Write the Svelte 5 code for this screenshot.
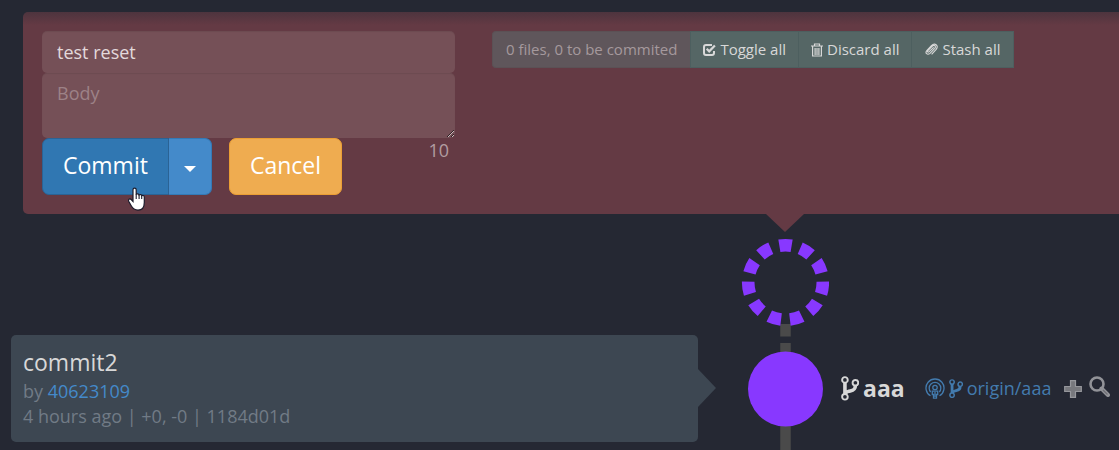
<script>
  let title = $state('test reset');
  let body = $state('');
  const ringDash = 100 / 11;
</script>

{#snippet branch(size)}
  <svg width={size} height={size * 1.375} viewBox="0 0 16 22" fill="none" stroke="currentColor" aria-hidden="true">
    <circle cx="3.5" cy="3.5" r="2.5" stroke-width="1.7" />
    <circle cx="3.5" cy="18.5" r="2.5" stroke-width="1.7" />
    <circle cx="12.8" cy="6" r="2.5" stroke-width="1.7" />
    <path d="M3.5 6v10M12.8 8.5c0 5-4 4.300-6.300 5.200-1.400.5-2 1-2.600 2" stroke-width="3.200" />
  </svg>
{/snippet}

<main>
  <section class="staging">
    <form onsubmit={(e) => e.preventDefault()}>
      <input class="field" type="text" aria-label="Title" bind:value={title} />
      <textarea class="field" placeholder="Body" aria-label="Body" bind:value={body}></textarea>
      <div class="actions">
        <div class="split">
          <button class="btn commit" type="submit">Commit</button>
          <button class="btn more" type="button" aria-label="More commit options"><span class="caret"></span></button>
        </div>
        <button class="btn cancel" type="button">Cancel</button>
        <span class="count">{title.length}</span>
      </div>
    </form>

    <div class="toolbar">
      <span class="status">0 files, 0 to be commited</span>
      <button type="button">
        <svg width="13" height="13" viewBox="0 0 13 13" fill="none" stroke="currentColor" aria-hidden="true">
          <path d="M9 2H3Q1 2 1 4v6q0 2 2 2h6q2 0 2-2V8" stroke-width="2" />
          <path d="M3.700 5.700l2.500 2.600L11.900 2.500" stroke-width="2.200" />
        </svg>
        Toggle all
      </button>
      <button type="button">
        <svg width="12" height="14" viewBox="0 0 12 14" fill="none" stroke="currentColor" aria-hidden="true">
          <path d="M0 3h12M3.500 3V1h5v2M1.600 3v10h8.800V3M4.100 5v7M6 5v7M7.900 5v7" stroke-width="1.200" />
        </svg>
        Discard all
      </button>
      <button type="button">
        <svg width="14" height="13" viewBox="0 0 14 13" fill="none" stroke="currentColor" aria-hidden="true">
          <path d="M9.700 4.300L5.200 8.600c-1.300 1.200-2.400.1-1.300-1.100L8.200 3.300c2-2 4.300 0 2.600 2L6 10.300c-2.600 2.300-5.400-.3-3-2.900L7.400 2.700c3.400-3.500 7.600-.2 4.800 3.700L7.600 11.300" stroke-width="1.100" />
        </svg>
        Stash all
      </button>
    </div>
  </section>

  <section class="graph">
    <article class="card">
      <h2>commit2</h2>
      <p>by <a href="#author">40623109</a></p>
      <p>4 hours ago | +0, -0 | 1184d01d</p>
    </article>

    <svg class="nodes" width="88" height="236" viewBox="0 0 88 236" aria-hidden="true">
      <path d="M44.500 110v12.500M44.500 129v12M44.500 205v31" stroke="#4a4a4a" stroke-width="10.500" />
      <circle
        cx="44.500" cy="68.500" r="37.300" fill="none" stroke="#8838ff" stroke-width="12.600"
        pathLength="100" stroke-dasharray="{ringDash * 0.58} {ringDash * 0.42}" stroke-dashoffset={ringDash * 0.29}
        transform="rotate(-90 44.5 68.5)"
      />
      <circle cx="44.500" cy="175" r="37.500" fill="#8838ff" />
    </svg>

    <div class="refs">
      <span class="local">{@render branch(18)} aaa</span>
      <a class="remote" href="#origin">
        <svg width="20" height="21" viewBox="0 0 20 21" fill="none" stroke="currentColor" stroke-width="1.300" aria-hidden="true">
          <path d="M5.500 17.800a9 9 0 1 1 9 0M5.700 14a5.800 5.800 0 1 1 8.600 0" />
          <circle cx="10" cy="9.500" r="2.200" />
          <path d="M7.300 13.200h5.400v3.300h-1.200v3.700h-3v-3.700H7.300zM10 14v5" />
        </svg>
        {@render branch(14)}
        <span>origin/aaa</span>
      </a>
      <button type="button" aria-label="Add ref">
        <svg width="18" height="18" viewBox="0 0 18 18" aria-hidden="true">
          <path d="M6.500.7h5v5.800h5.800v5h-5.800v5.800h-5v-5.800H.7v-5h5.800z" fill="#77787d" stroke="#96979c" stroke-width="1.200" />
        </svg>
      </button>
      <button class="search" type="button" aria-label="Search">
        <svg width="21" height="21" viewBox="0 0 21 21" fill="none" aria-hidden="true">
          <circle cx="8" cy="8" r="6.500" stroke="#929398" stroke-width="2.600" />
          <path d="M12.500 12.500l6.500 6.500" stroke="#929398" stroke-width="4" stroke-linecap="round" />
          <path d="M14 14l4.500 4.500" stroke="#6d6e74" stroke-width="1.200" />
        </svg>
      </button>
    </div>
  </section>

  <svg class="pointer" width="17" height="24" viewBox="0 0 17 24" aria-hidden="true">
    <path
      d="M5 14.500V2.700C5 .5 8.200.5 8.200 2.700v4.800c.5-1 2.600-.8 2.900.5.700-.9 2.400-.5 2.600.7.900-.8 2.600-.3 2.600 1.300v5.500c0 4.500-2.300 7.600-6.300 7.600-3.700 0-5.400-1.800-6.800-4.300L.7 14.300c-.8-1.800 1-3.100 2.500-1.800z"
      fill="#fff" stroke="#1b1b2b" stroke-width="1.200"
    />
    <path d="M8.200 7v5M11.100 8v4M13.700 9v3" stroke="#1b1b2b" stroke-width="1.100" />
  </svg>
</main>

<style>
  :global(body) {
    margin: 0;
    background: #252833;
  }

  main {
    position: relative;
    padding-top: 12px;
    font: 18px/25px 'Open Sans', sans-serif;
    color: #d8d8d8;
    overflow: hidden;
  }

  button,
  input,
  textarea {
    font: inherit;
    color: inherit;
    box-sizing: border-box;
    margin: 0;
  }

  .staging {
    position: relative;
    display: flex;
    align-items: flex-start;
    gap: 37px;
    margin-left: 23px;
    padding: 19px;
    border-radius: 5px 0 0 5px;
    background: linear-gradient(#4d343e, #643a44 13px);
  }

  .staging::after {
    content: '';
    position: absolute;
    top: 100%;
    right: 315px;
    border: solid transparent;
    border-width: 18px 19px 0;
    border-top-color: #643a44;
  }

  form {
    flex: 0 1 413px;
    min-width: 0;
  }

  .field {
    display: block;
    width: 100%;
    padding: 8px 15px;
    border: 0;
    border-radius: 5px;
    outline: 0;
    background: #755057;
    color: #e3d9db;
    box-shadow: inset 0 1px 1px rgb(0 0 0 / 7%);
  }

  input.field {
    height: 42px;
  }

  textarea.field {
    height: 65px;
    resize: vertical;
  }

  .field::placeholder {
    color: #9d8287;
  }

  .actions {
    display: flex;
    align-items: flex-start;
    gap: 17px;
  }

  .split {
    display: flex;
  }

  .btn {
    height: 57px;
    padding: 0 20px 2px;
    border: 1px solid;
    border-radius: 7px;
    font-size: 23px;
    color: #fff;
  }

  .commit {
    border-color: #2a6395;
    border-radius: 7px 0 0 7px;
    background: #3077b2;
  }

  .more {
    width: 43px;
    padding: 0;
    border-color: #337ab7;
    border-left: 0;
    border-radius: 0 7px 7px 0;
    background: #448aca;
  }

  .caret {
    display: inline-block;
    border: solid transparent;
    border-width: 6px 6px 0;
    border-top-color: #fff;
    vertical-align: middle;
  }

  .cancel {
    border-color: #eb9e34;
    background: #efac50;
  }

  .count {
    margin-left: auto;
    padding-right: 6px;
    color: #b19ca1;
  }

  .toolbar {
    display: flex;
    font-size: 15px;
    line-height: 35px;
    white-space: nowrap;
  }

  .status,
  .toolbar button {
    padding: 0 13px;
    border: 1px solid #4d5f5f;
    border-right-width: 0;
    background: #556665;
  }

  .status {
    border-color: #5b5155;
    border-radius: 4px 0 0 4px;
    background: #5f565b;
    color: #a5999d;
  }

  .toolbar button {
    display: flex;
    align-items: center;
    gap: 4px;
    padding: 0 12px;
  }

  .toolbar button:last-child {
    border-right-width: 1px;
  }

  .graph {
    display: grid;
    grid-template: 121px auto 8px / minmax(0, 1fr) 88px 290px;
  }

  .card {
    position: relative;
    grid-area: 2 / 1;
    margin: 0 43px 0 11px;
    padding: 12px 12px 13px;
    border-radius: 5px;
    background: #3d4752;
    color: #717b86;
  }

  .card::after {
    content: '';
    position: absolute;
    left: 100%;
    top: 34px;
    border: solid transparent;
    border-width: 19px 0 19px 18px;
    border-left-color: #3d4752;
  }

  h2 {
    margin: 0 0 2px;
    font-size: 23px;
    font-weight: 400;
    line-height: 30px;
    color: #d8d8d8;
  }

  p {
    margin: 0;
  }

  a {
    color: #448aca;
    text-decoration: none;
  }

  .nodes {
    grid-area: 1 / 2 / 4 / 3;
    display: block;
  }

  .refs {
    grid-area: 2 / 3;
    display: flex;
    align-items: center;
    padding-left: 12px;
    white-space: nowrap;
  }

  .local,
  .remote {
    display: flex;
    align-items: center;
    gap: 4px;
  }

  .local {
    font-size: 23px;
    font-weight: 700;
    margin-right: 20px;
  }

  .remote {
    margin-right: 13px;
    color: #437bae;
  }

  .refs button {
    display: flex;
    padding: 0;
    border: 0;
    background: none;
  }

  .refs .search {
    margin: 0 0 4px 7px;
  }

  .pointer {
    position: absolute;
    left: 128px;
    top: 187px;
  }
</style>
